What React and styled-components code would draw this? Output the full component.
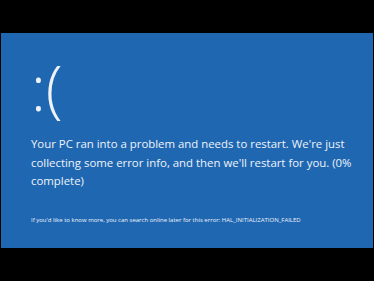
import React from 'react';
import styled, { createGlobalStyle } from 'styled-components';

const GlobalStyle = createGlobalStyle`
    html, body {
        margin: 0;
        padding: 0;
        background: #000;
    }
    body {
        width: 374px;
        height: 281px;
        overflow: hidden;
        font-family: "Open Sans", "Noto Sans", "Liberation Sans", sans-serif;
    }
`;

const Screen = styled.div`
    width: 374px;
    height: 281px;
    background: #000;
    padding: 33px 1px 0 1px;
    box-sizing: border-box;
`;

const Panel = styled.div`
    height: 215px;
    background: #2067b2;
    color: #eef3f9;
    padding: 25px 0 0 30px;
    box-sizing: border-box;
    display: flex;
    flex-direction: column;
`;

const Face = styled.div`
    font-size: 62px;
    font-weight: 300;
    line-height: 58px;
    height: 58px;
    letter-spacing: 0px;
`;

const Message = styled.p`
    margin: 19px 0 0 0;
    font-size: 11.4px;
    line-height: 18.5px;
    width: 340px;
`;

const Details = styled.p`
    margin: 25px 0 0 0;
    font-size: 6px;
    line-height: 9px;
`;

const App = () => {
    return (
        <Screen>
            <GlobalStyle />
            <Panel>
                <Face>:(</Face>
                <Message>
                    Your PC ran into a problem and needs to restart. We're just collecting some error info, and then we'll restart for you. (0% complete)
                </Message>
                <Details>If you'd like to know more, you can search online later for this error: HAL_INITIALIZATION_FAILED</Details>
            </Panel>
        </Screen>
    );
};

export default App;
